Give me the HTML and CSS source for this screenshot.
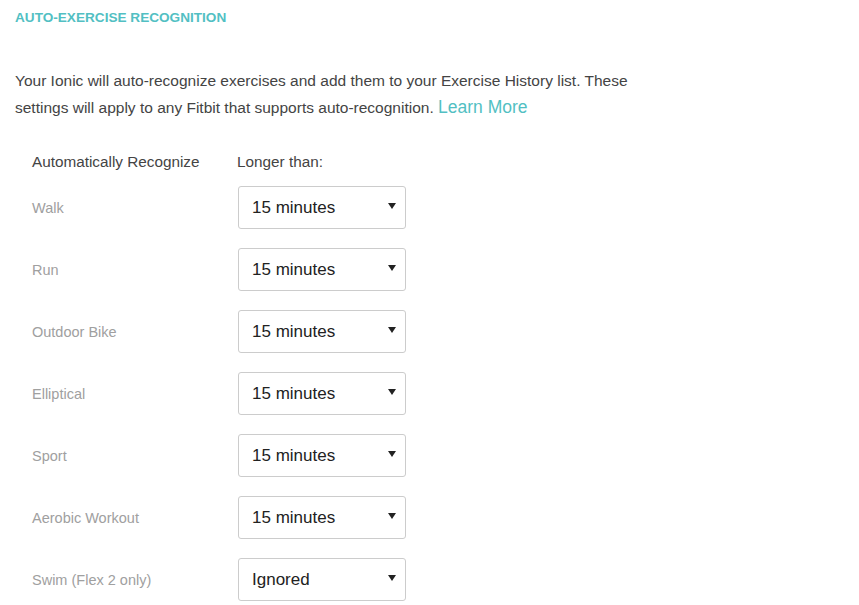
FILE: index.html
```html
<!DOCTYPE html>
<html lang="en">
<head>
	<meta charset="UTF-8">
	<title>Auto-Exercise Recognition</title>
	<link rel="stylesheet" href="styles.css">
</head>
<body>
<div class="section">
	<h2 class="title">Auto-Exercise Recognition</h2>
	<p class="intro">Your Ionic will auto-recognize exercises and add them to your Exercise History list. These<br>settings will apply to any Fitbit that supports auto-recognition. <a href="javascript:;" class="more">Learn More</a></p>

	<div class="rules">
		<div class="head">Automatically Recognize</div>
		<div class="head">Longer than:</div>

		<div class="name">Walk</div>
		<div class="pick"><select><option>15 minutes</option></select></div>

		<div class="name">Run</div>
		<div class="pick"><select><option>15 minutes</option></select></div>

		<div class="name">Outdoor Bike</div>
		<div class="pick"><select><option>15 minutes</option></select></div>

		<div class="name">Elliptical</div>
		<div class="pick"><select><option>15 minutes</option></select></div>

		<div class="name">Sport</div>
		<div class="pick"><select><option>15 minutes</option></select></div>

		<div class="name">Aerobic Workout</div>
		<div class="pick"><select><option>15 minutes</option></select></div>

		<div class="name">Swim (Flex 2 only)</div>
		<div class="pick"><select><option>Ignored</option></select></div>
	</div>
</div>
</body>
</html>
```

FILE: styles.css
```css
body{
	margin:0;
	padding:0;
	background:#fff;
	font-family:"Liberation Sans", Arial, sans-serif;
	color:#444;
}
.section{
	padding:10px 15px;
}
.title{
	margin:0;
	font-size:13.6px;
	line-height:16px;
	font-weight:bold;
	text-transform:uppercase;
	color:#52bfc3;
}
.intro{
	margin:41px 0 0;
	font-size:15.5px;
	line-height:27px;
	color:#444;
}
.intro .more{
	color:#52bfc3;
	text-decoration:none;
	font-size:17.5px;
}
.rules{
	display:grid;
	grid-template-columns:205px 168px;
	row-gap:19px;
	margin:31px 0 0 17px;
	align-items:center;
}
.rules .head{
	font-size:15.3px;
	line-height:20px;
	color:#444;
	margin-bottom:-5px;
}
.rules .name{
	font-size:14.5px;
	color:#a0a0a0;
}
.pick{
	position:relative;
	margin-left:1px;
}
.pick select{
	display:block;
	width:168px;
	height:43px;
	padding:0 30px 0 13px;
	border:1px solid #ccc;
	border-radius:3px;
	background:#fff;
	font-family:"Liberation Sans", Arial, sans-serif;
	font-size:17px;
	color:#222;
	-webkit-appearance:none;
	appearance:none;
}
/* 下拉箭头 */
.pick:after{
	content:"";
	position:absolute;
	right:9px;
	top:17px;
	width:0;
	height:0;
	border-left:4.5px solid transparent;
	border-right:4.5px solid transparent;
	border-top:6px solid #222;
	pointer-events:none;
}
```
